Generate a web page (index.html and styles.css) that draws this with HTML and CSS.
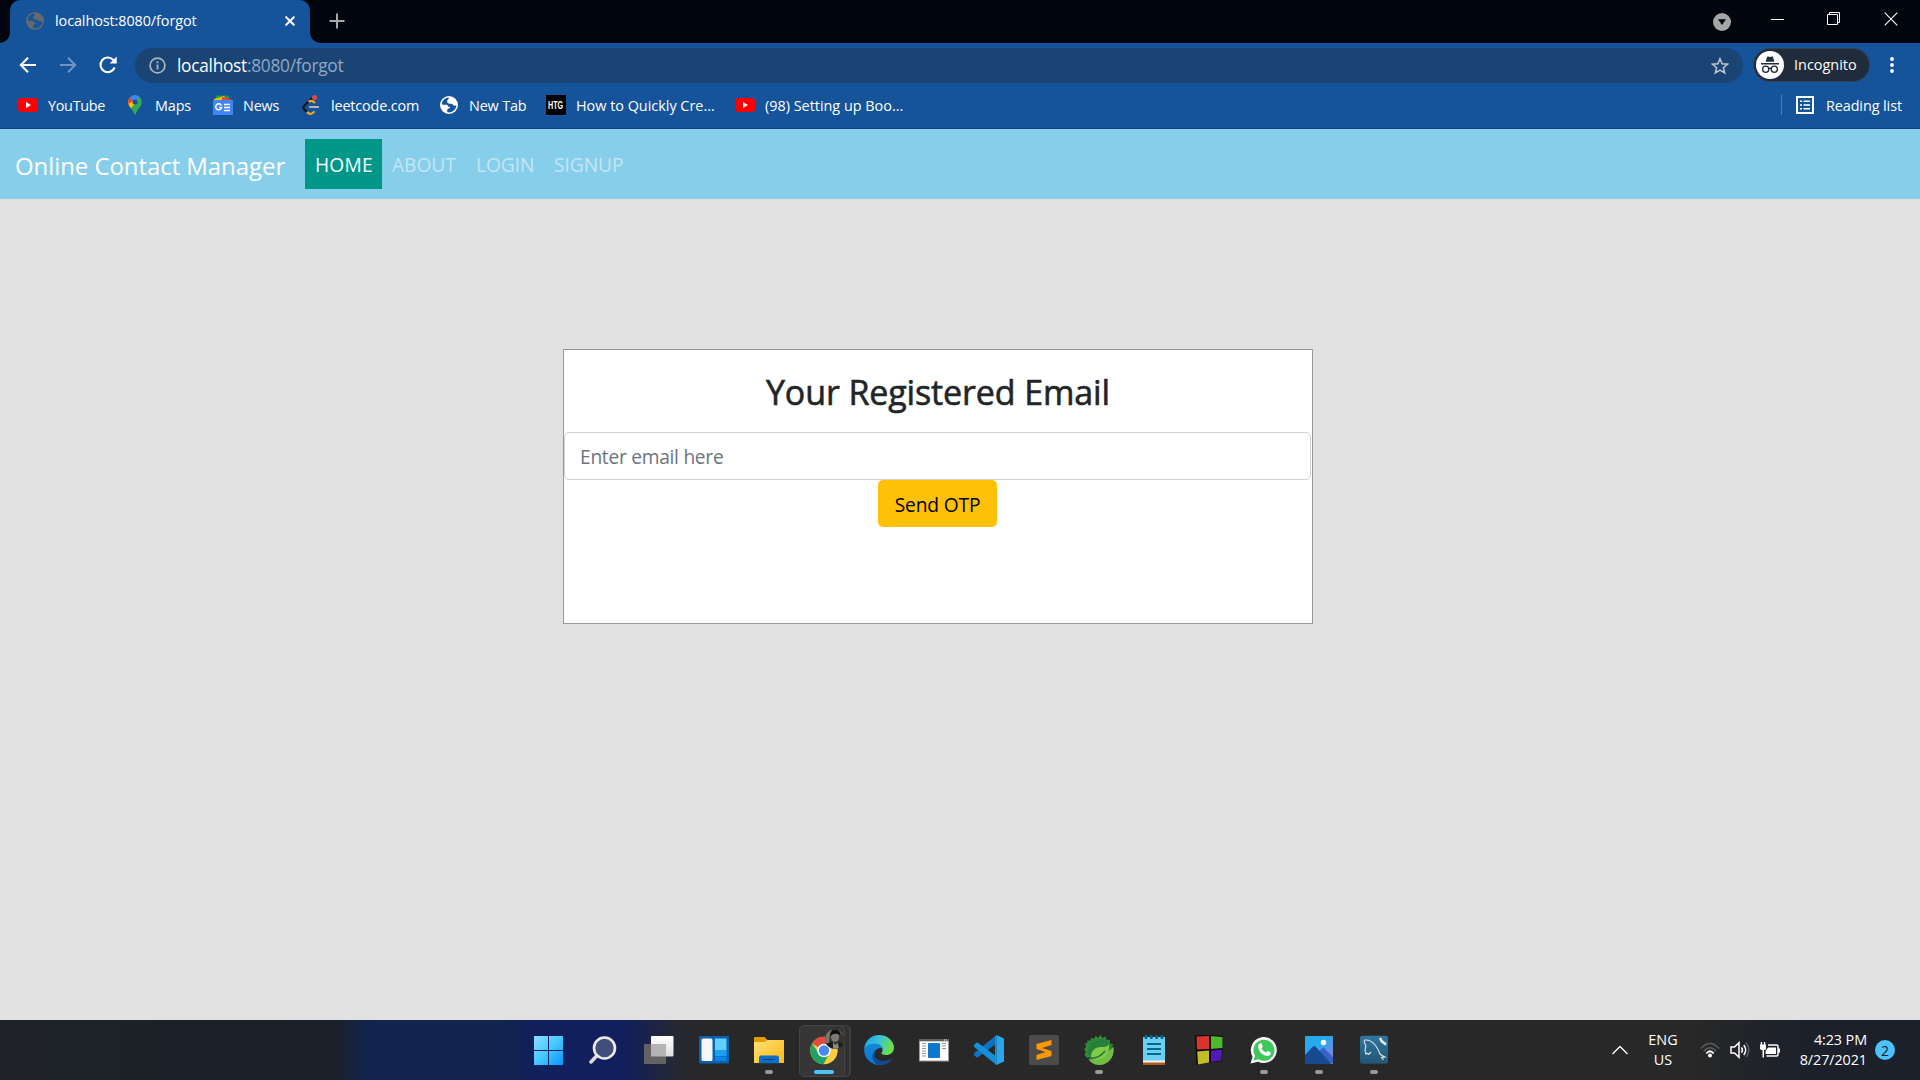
FILE: index.html
```
<!DOCTYPE html>
<html lang="en">
<head>
<meta charset="utf-8">
<title>localhost:8080/forgot</title>
<link rel="stylesheet" href="styles.css">
</head>
<body>
<svg class="defs" width="0" height="0" aria-hidden="true">
  <defs>
    <symbol id="globe" viewBox="0 0 18 18"><circle cx="9" cy="9" r="9" fill="currentColor"/><path class="land" d="M8.6 1.6C5 1.9 2.2 4.600 1.700 8.300c1.500.5 3.400.6 4.300.4 1.200-.2 1.800.5 2 1.400.2.8.9.9 1.700.8.6 0 .8.8.2 1.200-.8.5-2.300.5-2.600 1.500-.3.9.2 1.700-.1 2.500 1.800.6 4.400.3 6-1 2.300-1.600 3.200-4.200 3.100-6.100-1 .9-2.700 1-3.300-.3-.4-1-1.500-1-2.600-1-1.700 0-3.300-.7-3.300-2.300 0-1.300.9-2 1.300-2.500.4-.4.6-.8.200-1.300z"/></symbol>
    <symbol id="youtube" viewBox="0 0 20 20"><rect x="0" y="3" width="20" height="14" rx="3.500" fill="#f00"/><path d="M8 7v6l5-3z" fill="#fff"/></symbol>
  </defs>
</svg>
<div class="screen">
  <header class="chrome">
    <div class="tabstrip">
      <div class="tab">
        <svg class="fav" viewBox="0 0 18 18"><use href="#globe"/></svg>
        <span class="tab-title">localhost:8080/forgot</span>
        <svg class="tab-close" viewBox="0 0 10 10"><path d="M.6.6l8.800 8.800M9.400.6L.6 9.400" stroke="#fff" stroke-width="2"/></svg>
      </div>
      <svg class="plus" viewBox="0 0 16 16"><path d="M8 .5v15M.5 8h15" stroke="#a8a8aa" stroke-width="2"/></svg>
      <div class="window-controls">
        <svg width="18" height="18" viewBox="0 0 18 18"><circle cx="9" cy="9" r="9" fill="#a5a6a8"/><path d="M5 6.300h8L9 12z" fill="#01060e"/></svg>
        <svg width="14" height="14" viewBox="0 0 14 14"><path d="M0 7.500h13" stroke="#fff"/></svg>
        <svg width="14" height="14" viewBox="0 0 14 14"><path d="M.5 2.500h10v10H.5zM2.500 2.500v-2h10v10h-2" fill="none" stroke="#fff"/></svg>
        <svg width="14" height="14" viewBox="0 0 14 14"><path d="M.7.7l12.600 12.600M13.300.7L.7 13.300" stroke="#fff" stroke-width="1.100"/></svg>
      </div>
    </div>
    <div class="toolbar">
      <svg class="nav-icon" viewBox="0 0 20 20"><path d="M18 10H3.500M10 2.800L2.800 10l7.200 7.200" fill="none" stroke="#fff" stroke-width="2"/></svg>
      <svg class="nav-icon" viewBox="0 0 20 20"><path d="M2 10h14.500M10 2.800l7.200 7.200-7.200 7.200" fill="none" stroke="#7196c5" stroke-width="2"/></svg>
      <svg class="nav-icon" viewBox="0 0 20 20"><path d="M16.600 12.500A7.300 7.300 0 1 1 15.200 4.900L17 7" fill="none" stroke="#fff" stroke-width="2.100"/><path d="M18.700 1.500v7h-7z" fill="#fff"/></svg>
      <div class="omnibox">
        <svg class="info" viewBox="0 0 17 17"><circle cx="8.500" cy="8.500" r="7.400" fill="none" stroke="#aeb4bd" stroke-width="1.700"/><path d="M8.500 7.500v5M8.500 4.300v1.900" stroke="#aeb4bd" stroke-width="1.800"/></svg>
        <span class="url"><span class="host">localhost</span>:8080/forgot</span>
        <svg class="star" viewBox="0 0 18 18"><path d="M9 1.700l2.100 5 5.400.5-4.100 3.500 1.300 5.300L9 13.200 4.300 16l1.300-5.300L1.500 7.200l5.400-.5z" fill="none" stroke="#c2c6cc" stroke-width="1.500"/></svg>
      </div>
      <div class="incognito">
        <svg width="28" height="28" viewBox="0 0 28 28"><circle cx="14" cy="14" r="14" fill="#fff"/><path d="M9.700 10.700l1.200-4.500c.2-.7.800-.8 1.300-.6l1.800.5 1.800-.5c.6-.2 1.200 0 1.300.6l1.200 4.500zM5 12h18v1.500H5z" fill="#202b3b"/><g fill="none" stroke="#202b3b" stroke-width="1.300"><circle cx="9.700" cy="18.200" r="3.100"/><circle cx="18.300" cy="18.200" r="3.100"/><path d="M12.800 17.700q1.200-.9 2.400 0"/></g></svg>
        <span class="incognito-label">Incognito</span>
      </div>
      <svg class="dots" viewBox="0 0 4 16"><circle cx="2" cy="2" r="1.900"/><circle cx="2" cy="8" r="1.900"/><circle cx="2" cy="14" r="1.900"/></svg>
    </div>
    <div class="bookmarks">
      <div class="bm tight"><svg viewBox="0 0 20 20"><use href="#youtube"/></svg>YouTube</div>
      <div class="bm"><svg viewBox="0 0 20 20"><path d="M10 .3C6 .3 3.200 3.200 3.200 6.900c0 5.400 5 6.900 6.100 12.400.1.600 1.200.6 1.400 0 1.100-5.500 6.100-7 6.100-12.400C16.800 3.200 14 .3 10 .3z" fill="#34a853"/><path d="M4.700 2.800C3.600 4 3.200 5.400 3.200 6.900c0 2 .6 3.400 1.500 4.700L11 4.500z" fill="#ea4335"/><path d="M3.900 4.500C2.600 7.600 3.600 10.600 6 13.200l6.300-7z" fill="#fbbc04"/><path d="M4.700 2.800L8 6.500l6.800-3.800C13.400 1 11.800.3 10 .3 7.700.3 5.800 1.300 4.700 2.800z" fill="#4285f4"/><path d="M4.700 2.800C3.100 4.700 3 6.600 3.400 8.700L8 6z" fill="#ea4335"/><circle cx="10" cy="7" r="2.500" fill="#15539a"/></svg>Maps</div>
      <div class="bm"><svg viewBox="0 0 20 20"><path d="M3 .5h13v5H3z" fill="#0c9d58"/><path d="M1 4L11 1l3 4H1z" fill="#fbbc04"/><path d="M9 2l9 2v2H9z" fill="#ea4335"/><rect y="5" width="20" height="15" rx="1" fill="#4285f4"/><path d="M8.300 10.300A3 3 0 1 0 8.600 12.600H6M11 9.500h6M11 12.500h6M11 15.500h6" fill="none" stroke="#fff" stroke-width="1.500"/></svg>News</div>
      <div class="bm"><svg viewBox="0 0 20 20"><path d="M12 2.500L3 11q-1.500 1.500 0 3l3 3" fill="none" stroke="#151515" stroke-width="2.300"/><path d="M6 17q3.500 4 7.500-.6M7.500 7q3-2.500 6.500 1" fill="none" stroke="#f7a41d" stroke-width="2.200"/><path d="M8 12h10" stroke="#b3b1b0" stroke-width="2"/><circle cx="13.500" cy="2.500" r="2.500" fill="#d64b45"/></svg>leetcode.com</div>
      <div class="bm"><svg class="globe-white" viewBox="-1 -1 20 20"><use href="#globe" width="18" height="18"/></svg>New Tab</div>
      <div class="bm"><span class="htg"><span>HTG</span></span><span class="wide">How to Quickly Cre...</span></div>
      <div class="bm"><svg viewBox="0 0 20 20"><use href="#youtube"/></svg><span class="wide">(98) Setting up Boo...</span></div>
      <div class="reading"><svg width="18" height="18" viewBox="0 0 18 18"><path d="M1 1h16v16H1z" fill="none" stroke="#fff" stroke-width="2"/><path d="M4 5.200h2M4 9h2M4 12.800h2M7.500 5.200H14M7.500 9H14M7.500 12.800H14" stroke="#fff" stroke-width="1.600"/></svg>Reading list</div>
    </div>
  </header>

  <nav class="navbar">
    <a class="brand">Online Contact Manager</a>
    <a class="link active">HOME</a>
    <a class="link about">ABOUT</a>
    <a class="link login">LOGIN</a>
    <a class="link">SIGNUP</a>
  </nav>

  <main class="page">
    <form class="card">
      <h2>Your Registered Email</h2>
      <input type="email" placeholder="Enter email here">
      <button type="button">Send OTP</button>
    </form>
  </main>

  <footer class="taskbar">
    <div class="apps">
      <div class="app"><svg viewBox="0 0 30 30"><defs><linearGradient id="w" x1="0" y1="0" x2="1" y2="1"><stop offset="0" stop-color="#8be0ff"/><stop offset=".5" stop-color="#45c8fd"/><stop offset="1" stop-color="#0894fb"/></linearGradient></defs><path d="M0 1h14v14H0zM15 1h14v14H15zM0 16h14v14H0zM15 16h14v14H15z" fill="url(#w)"/></svg></div>
      <div class="app"><svg viewBox="0 0 30 30"><path d="M8 20.500l-6 6.500" stroke="#dcdcdf" stroke-width="3.500" stroke-linecap="round"/><circle cx="15.500" cy="13" r="10.500" fill="#424f7c" stroke="#ececee" stroke-width="2.600"/></svg></div>
      <div class="app"><svg viewBox="0.5 0 30 30"><defs><linearGradient id="tv" x1="0" y1="0" x2="0" y2="1"><stop offset="0" stop-color="#fff"/><stop offset="1" stop-color="#dedede"/></linearGradient></defs><rect x="7.500" y="1" width="22.500" height="20.500" rx="1" fill="url(#tv)"/><rect x="0.500" y="9" width="22" height="20" rx="1" fill="#636363"/><path d="M7.500 9h15v12.500h-15z" fill="#b4b4b4"/></svg></div>
      <div class="app"><svg viewBox="0 0 30 30"><rect y="1" width="30" height="27.500" rx="1" fill="#0862ad"/><rect x="2.500" y="3.500" width="11" height="22.500" rx="1.500" fill="#f5f6f8"/><path d="M16 3.500h11.500v12H16z" fill="#5fd0fc"/><path d="M16 16h11.500v5H16z" fill="#1a9ff8"/><path d="M16 21.500h11.500V26H16z" fill="#0786ea"/></svg></div>
      <div class="app running"><svg viewBox="0 0 30 30"><defs><linearGradient id="fo" x1="0" y1="0" x2="1" y2="1"><stop offset="0" stop-color="#ffe07a"/><stop offset="1" stop-color="#fdb913"/></linearGradient></defs><path d="M0 3q0-1 1-1h9.500l3 3H29q1 0 1 1v4H0z" fill="#e19c05"/><path d="M0 7h10.500l3-2H29q1 0 1 1v22H0z" fill="url(#fo)"/><path d="M5 28.200v-5.700q0-2 2-2h16q2 0 2 2v5.700z" fill="#0d70c4"/><path d="M9 24.500h12" stroke="#063f7d"/></svg></div>
      <div class="app current"><svg viewBox="0 0 30 30"><circle cx="15" cy="15.500" r="13.700" fill="#fbcd3c"/><path d="M15 15.500L3.100 8.600A13.700 13.700 0 0 1 26.900 8.600z" fill="#e34b3f"/><path d="M15 9.500h12.300l-.5-1L15 5z" fill="#e34b3f"/><path d="M3.100 8.600A13.700 13.700 0 0 0 14.500 29.200L20.500 18.500 9.500 18z" fill="#1ea362"/><circle cx="15" cy="15.500" r="6.700" fill="#fff"/><circle cx="15" cy="15.500" r="5.200" fill="#4a8af4"/></svg><svg class="avatar" viewBox="0 0 20 20"><defs><clipPath id="av"><circle cx="10" cy="10" r="10"/></clipPath></defs><g clip-path="url(#av)"><path d="M0 0h20v20H0z" fill="#35342f"/><path d="M0 0h7L5 6l-1 8-4 1z" fill="#77766f"/><path d="M13 0h7v7l-4-2z" fill="#4e4d48"/><ellipse cx="10" cy="8" rx="4" ry="5" fill="#7b7972"/><path d="M5 7q0-6 5-6t5 5q-5-3-10 1z" fill="#100f0e"/><path d="M0 15l7-2 3 3 4-3 6 3v4H0z" fill="#1c1b19"/><path d="M8 13l2 3 3-2 1 6H8z" fill="#8b8984"/></g></svg></div>
      <div class="app"><svg viewBox="0 0 30 30"><defs><linearGradient id="ea" x1="0" y1="0" x2="1" y2=".3"><stop offset="0" stop-color="#1b9de2"/><stop offset=".5" stop-color="#35c1e0"/><stop offset="1" stop-color="#69e04a"/></linearGradient><linearGradient id="eb" x1="0" y1="0" x2="0" y2="1"><stop offset="0" stop-color="#1687d5"/><stop offset="1" stop-color="#0874d2"/></linearGradient></defs><path d="M.2 14C.7 6 7.200 0 15 0c9 0 15 6.500 15 12.500 0 5-3.800 7.500-7.800 7.500-3.300 0-5.200-1-4.700-2 3-4-.5-8.500-5.500-8.500C6.500 9.500 2 12 .2 14z" fill="url(#ea)"/><path d="M.1 16C0 11.500 5 8.500 10.500 8.500c5 0 8 3 8.200 5.500-1-2-6.700-1.500-8 3-1.700 6 4 10.500 9.300 12.200A15 15 0 0 1 .1 16z" fill="url(#eb)"/><path d="M11 15.500c-2 5 1.500 10.500 8 10.500 3.500 0 6-1.300 7.800-2.300.7-.3 1 .2.700.7-2.600 4.300-7.500 6-12.500 5.600C8 28.500 6.500 19.500 11 15.500z" fill="#124a93"/></svg></div>
      <div class="app"><svg viewBox="0 0 30 30"><path d="M0 4h30v22.500H0z" fill="#9a9b9d"/><path d="M1 6.500h28v19H1z" fill="#fff"/><path d="M0 4h30v2H0z" fill="#5f6163"/><path d="M25 5h1M27 5h1" stroke="#fff"/><rect x="9" y="8" width="12" height="15" rx="1" fill="#0d78cb"/><path d="M3 8.500h4M3 11h4M3 13.500h4M3 16h4M3 18.500h4M3 21h4M23 8.500h4M23 11h4M23 13.500h4" stroke="#999" stroke-width="1"/></svg></div>
      <div class="app"><svg viewBox="0 0 30 30"><path d="M22.500 0L30 3.500v23L22.500 30z" fill="#2ba4ee"/><path d="M22.500 0v8.500L3.200 22.700 0 20.300v-2z" fill="#0b74bd"/><path d="M22.500 30v-8.500L3.200 7.300 0 9.700v2z" fill="#178fd8"/><path d="M22.500 0L21 1.500v27l1.500 1.500z" fill="#1d95dd"/></svg></div>
      <div class="app"><svg viewBox="0 0 30 30"><rect width="30" height="30" rx="2" fill="#4b4b4b"/><path d="M22.500 5v5L13 13l9.500 3v5L7.500 25v-5l9-3-9-3V9z" fill="#ff9800"/></svg></div>
      <div class="app running"><svg viewBox="0 0 30 30"><path d="M1 8L3.200 8.500 3.500 5.200 6.500 6 7.300 2.500 10 4l1.700-3.300L14 3l2.500-3L18.300 3l3.300-1.500L22.500 5l3.500-.3-.3 3.500 3.300 1L28 14 3 23 .5 20 2 17 0 14.500 2 12z" fill="#2f8a39"/><circle cx="16.500" cy="16.500" r="12.500" fill="#25803a"/><path d="M29.500 12c1.500 8-3.500 17.500-13 18-6 .3-10-2.500-12-6 9 2 17-5 25-12z" fill="#72bd43"/><path d="M7 22c0-7 5-10 10-10 4 0 6 0 8-3 1 8-3 15-11 15.500-3 .2-5-.5-7-2.500z" fill="#83ca4b"/><path d="M5 23q10 1 16-7" fill="none" stroke="#247937" stroke-width="1.500"/></svg></div>
      <div class="app"><svg viewBox="0 0 30 30"><path d="M4 2h22v25H4z" fill="#6bd0ef"/><path d="M4 25.500h22V28H4z" fill="#f3f3f3"/><path d="M4 27.500h22V30H4z" fill="#b05a17"/><path d="M8 9h14M8 14h14M8 19h14" stroke="#08658e" stroke-width="2"/><path d="M7 0v4M12.300 0v4M17.600 0v4M23 0v4" stroke="#08658e" stroke-width="2.600"/></svg></div>
      <div class="app"><svg viewBox="0 0 30 30"><path d="M1 .5L16 0l13 1-1 25-12 1.500L2.500 30z" fill="#0a0808"/><path d="M2.500 1.500L15 1v13l-12 .5z" fill="#d9352c"/><path d="M17 1l11.500 1v11L17 14z" fill="#4cb82d"/><path d="M3.200 16.500L15 15.500v12L4 29.500z" fill="#c4bc27"/><path d="M17 15.500L28 14.500 27.500 25.500 17 27z" fill="#5419b5"/></svg></div>
      <div class="app running"><svg viewBox="0 0 30 30"><path d="M1.500 28.500l2-7A13 13 0 1 1 9 26.700z" fill="#f7f7f7"/><path d="M4.700 25.500l1.300-4.700A10.500 10.500 0 1 1 9.400 24.200z" fill="#3fc65c"/><path d="M10.500 8.500q1.500-1 2.300.5l.9 2.300q.2.700-1.200 2.100 1.500 2.800 4.600 4.100 1.300-1.700 1.900-1.500l2.600 1.300q.6.400 0 1.900-1 2-4 1.700-7.300-1.500-8.600-8.800-.1-2.500 1.500-3.600z" fill="#fff"/></svg></div>
      <div class="app running"><svg viewBox="0 0 30 30"><defs><linearGradient id="ph" x1="0" y1="0" x2="1" y2="1"><stop offset=".4" stop-color="#25aaf0"/><stop offset="1" stop-color="#a574d6"/></linearGradient></defs><rect x="1" y="1" width="28" height="28" rx="1" fill="url(#ph)"/><path d="M16 15l3.500-2.500L29 22v6H18z" fill="#3862c8"/><path d="M1 20L9 11.500q1.200-1 2.500 0L27.500 29H1z" fill="#184a91"/><circle cx="19.500" cy="7.500" r="2.700" fill="#fff"/></svg></div>
      <div class="app running"><svg viewBox="0 0 30 30"><defs><linearGradient id="my" x1="0" y1="0" x2="0" y2="1"><stop offset="0" stop-color="#3275a0"/><stop offset="1" stop-color="#225674"/></linearGradient></defs><rect x="1" y=".7" width="28" height="28" rx="2.500" fill="url(#my)"/><path d="M9.500 19.500q-1-2-2.500-.5-.5-2-1-3.500.5-3 1-4.500Q4 5.500 6 5q6-.5 10.500 5.500 3 4 4.500 8.500 1.500 1.500 5 3l-3.500.5 2 2.500M9.500 19.500L12 17" fill="none" stroke="#dfe9ef" stroke-width="1.100"/><path d="M21 3l1.500 3 2.500 2 2 1.500" stroke="#fff" stroke-width="2.300" fill="none"/></svg></div>
    </div>
    <div class="tray">
      <svg class="chev" viewBox="0 0 16 10"><path d="M.5 9L8 1.500 15.500 9" fill="none" stroke="#fff" stroke-width="1.300"/></svg>
      <div class="lang">ENG<br>US</div>
      <svg class="wifi" viewBox="0 0 20 16"><g fill="none" stroke-width="1.500"><path d="M1 6.500q9-10 18 0M3.800 9.300q6.200-7 12.400 0" stroke="#5b5c5d"/><path d="M6.300 11.500q3.700-4.500 7.400 0" stroke="#fff" stroke-width="1.800"/></g><circle cx="10" cy="13.500" r="2" fill="#fff"/></svg>
      <svg class="vol" viewBox="0 0 20 18"><path d="M1 6h3.500l4.500-4.300v14.600L4.500 12H1z" fill="none" stroke="#fff" stroke-width="1.500"/><path d="M11.500 6.300q1.800 2.700 0 5.400M13.800 4q3.800 5 0 10" fill="none" stroke="#fff" stroke-width="1.500"/><path d="M16.200 1.800q5.300 7.200 0 14.400" fill="none" stroke="#5b5c5d" stroke-width="1.500"/></svg>
      <svg class="bat" viewBox="0 0 20 16"><path d="M8 3h8.500q1.500 0 1.500 1.500v8q0 1.500-1.500 1.500H6.500" fill="none" stroke="#fff" stroke-width="1.500"/><path d="M8 5.500h8v6.500H5.500V9z" fill="#fff"/><path d="M18 6.500h2v4h-2zM0 2.500h6v4q0 1.500-2 1.500v7.500H2.500V8Q0 8 0 6.500zM.8 0h1.300v3H.8zM3.900 0h1.300v3H3.900z" fill="#fff"/></svg>
      <div class="clock">4:23 PM<br>8/27/2021</div>
      <div class="badge">2</div>
    </div>
  </footer>
</div>
</body>
</html>
```
FILE: styles.css
```
* { box-sizing: border-box; }
body { margin: 0; font-family: "Open Sans", "Noto Sans", sans-serif; }
svg { display: block; flex: none; }
.defs { position: absolute; }
.screen { width: 1920px; height: 1080px; display: flex; flex-direction: column; overflow: hidden; background: #e1e1e1; }

/* Browser frame */
.chrome { height: 129px; background: #15539a; border-bottom: 1px solid #103f78; color: #fff; font-size: 14.4px; letter-spacing: -0.08px; white-space: nowrap; }
.tabstrip { height: 43px; background: #01060e; display: flex; align-items: center; padding-left: 10px; }
.tab { position: relative; width: 300px; height: 43px; background: #15539a; border-radius: 10px 10px 0 0; display: flex; align-items: center; padding: 0 15px 2px 16px; }
.tab::before, .tab::after { content: ""; position: absolute; bottom: 0; width: 10px; height: 10px; }
.tab::before { left: -10px; background: radial-gradient(circle at 0 0, transparent 9.5px, #15539a 10px); }
.tab::after { right: -10px; background: radial-gradient(circle at 100% 0, transparent 9.5px, #15539a 10px); }
.fav { width: 18px; height: 18px; color: #66696e; }
.land { fill: #15539a; }
.tab-title { margin-left: 11px; flex: 1; }
.tab-close { width: 10px; height: 10px; }
.plus { width: 16px; height: 16px; margin-left: 19px; margin-bottom: 1px; }
.window-controls { margin-left: auto; display: grid; grid-template-columns: 58px 56px 57px 36px; align-items: center; height: 43px; padding-bottom: 6px; }
.window-controls svg:first-child { margin-top: 6px; }
.toolbar { height: 41px; padding: 5px 26px 0 18px; display: flex; }
.nav-icon { width: 20px; height: 20px; margin: 7px 20px 0 0; }
.nav-icon:nth-child(3) { margin-right: 17px; }
.omnibox { width: 1608px; height: 35px; border-radius: 18px; background: #194474; display: flex; align-items: center; padding: 0 14px; }
.info { width: 17px; height: 17px; }
.url { margin-left: 11px; font-size: 17.3px; letter-spacing: -0.27px; color: #93a9c6; flex: 1; }
.host { color: #fff; }
.star { width: 18px; height: 18px; }
.incognito { width: 117px; height: 34px; margin-left: 10px; border-radius: 17px; background: #202b3b; border: 1px solid #36404f; padding-left: 2px; display: flex; align-items: center; gap: 10px; }
.incognito-label { letter-spacing: 0.02px; padding-bottom: 2px; }
.dots { width: 4px; height: 16px; margin: 9px 0 0 20px; fill: #fff; }
.bookmarks { height: 44px; padding: 0 0 2px 18px; display: grid; grid-template-columns: 107px 88px 88px 138px 107px 189px 1fr auto; align-items: center; letter-spacing: -0.15px; }
.bm { display: flex; align-items: center; gap: 10px; }
.tight { letter-spacing: -0.3px; }
.wide { letter-spacing: 0; }
.bm svg { width: 20px; height: 20px; }
.globe-white { color: #fff; }
.htg { width: 20px; height: 20px; background: #000; font: 700 11px/20px "Liberation Sans", sans-serif; letter-spacing: 0; display: flex; justify-content: center; }
.htg span { transform: scaleX(0.65); }
.reading { display: flex; align-items: center; gap: 12px; height: 20px; border-left: 1px solid #4d7db3; padding: 0 18px 0 14px; letter-spacing: -0.08px; }

/* Site */
.navbar { height: 70px; background: #87ceeb; display: flex; align-items: center; padding-left: 15px; font-size: 19.2px; }
.brand { width: 290px; font-size: 24px; letter-spacing: -0.07px; color: #fff; white-space: nowrap; margin-top: 3px; }
.link { height: 50px; line-height: 52px; padding: 0 10px; letter-spacing: -0.05px; color: rgba(255, 255, 255, 0.5); }
.active { width: 77px; background: #009688; color: #fff; letter-spacing: 0.2px; }
.about { width: 84px; }
.login { width: 78px; }
.page { flex: 1; padding: 150px 0 0 563px; }
.card { width: 750px; height: 275px; background: #fff; border: 1px solid #999; display: flex; flex-direction: column; align-items: center; }
h2 { margin: 18px 0 16px; font-size: 34px; line-height: 48px; font-weight: 500; letter-spacing: -0.12px; -webkit-text-stroke: 0.6px #212529; color: #212529; white-space: nowrap; }
.card input { width: 747px; height: 48px; align-self: flex-start; border: 1px solid #ced4da; border-radius: 5px; padding: 0 15px; font: 400 19.2px "Open Sans", sans-serif; letter-spacing: -0.28px; }
.card input::placeholder { color: #6c757d; opacity: 1; }
.card button { width: 119px; height: 47px; margin-right: 1px; border: 0; border-radius: 5px; background: #ffc107; color: #000; font: 400 19.2px "Open Sans", sans-serif; letter-spacing: -0.15px; padding: 2px 0 0; }

/* Taskbar */
.taskbar { height: 60px; background: linear-gradient(90deg, #1e2228 0, #1b212a 335px, #12244f 370px, #12244f 500px, #111f5c 540px, #111f5c 625px, #272830 680px, #282828 720px, #282828 1690px, #1b202b 1810px, #1b202b 100%); display: flex; justify-content: space-between; color: #fff; padding-left: 521px; }
.apps { display: grid; grid-template-columns: repeat(16, 55px); }
.app { position: relative; display: grid; place-items: center; }
.app > svg { width: 30px; height: 30px; z-index: 1; }
.running::after { content: ""; position: absolute; left: 24px; bottom: 6px; width: 8px; height: 4px; border-radius: 2px; background: #999; }
.current::before { content: ""; position: absolute; left: 3px; top: 5px; width: 44px; height: 50px; border: 1px solid #444; border-radius: 5px; background: #363636; box-shadow: 5px 0 0 -1px #303030, 6px 0 0 #404040; }
.current::after { content: ""; position: absolute; left: 18px; bottom: 6px; width: 20px; height: 4px; border-radius: 2px; background: #4cc2ff; }
.app > .avatar { position: absolute; left: 29px; top: 9px; width: 20px; height: 20px; }
.tray { display: flex; align-items: center; font-size: 14.4px; line-height: 20px; padding-right: 25px; }
.chev { width: 16px; height: 10px; margin-right: 18px; }
.lang { width: 34px; text-align: center; margin-right: 20px; }
.wifi { width: 20px; height: 16px; margin-right: 10px; }
.vol { width: 20px; height: 18px; margin-right: 10px; }
.bat { width: 20px; height: 16px; margin-right: 19px; }
.clock { width: 68px; text-align: right; letter-spacing: -0.1px; margin-right: 8px; white-space: nowrap; }
.badge { width: 20px; height: 20px; border-radius: 50%; background: #4cc2ff; color: #10202c; font-size: 14px; line-height: 21px; text-align: center; }
```
